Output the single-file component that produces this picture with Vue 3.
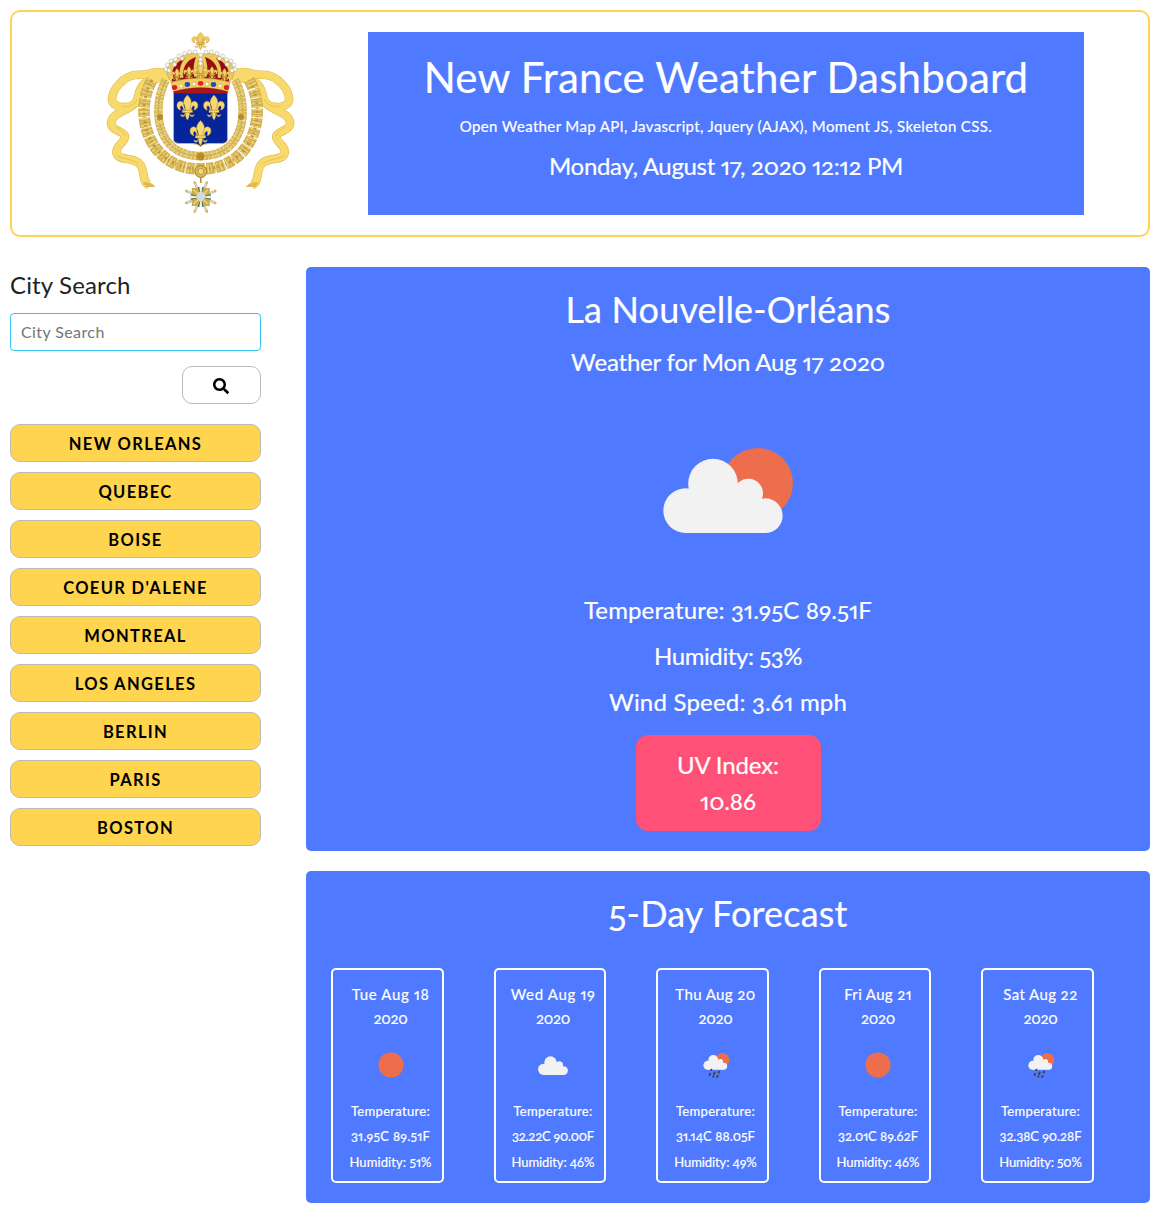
<script setup>
const cities = ['New Orleans', 'Quebec', 'Boise', "Coeur d'Alene", 'Montreal', 'Los Angeles', 'Berlin', 'Paris', 'Boston']

// ls: per-line letter spacing in px
const stats = [
  { text: 'Temperature: 31.95C 89.51F', ls: 0.14 },
  { text: 'Humidity: 53%', ls: -0.4 },
  { text: 'Wind Speed: 3.61 mph', ls: 0.2 }
]

const days = [
  { date: 'Tue Aug 18', dls: 0.67, icon: 'sun', temp: '31.95C 89.51F', tls: 0.29, hum: '51%', hls: 0.08 },
  { date: 'Wed Aug 19', dls: 0.68, icon: 'cloud', temp: '32.22C 90.00F', tls: -0.25, hum: '46%', hls: -0.09 },
  { date: 'Thu Aug 20', dls: 0.4, icon: 'rain', temp: '31.14C 88.05F', tls: 0.05, hum: '49%', hls: -0.09 },
  { date: 'Fri Aug 21', dls: 0.36, icon: 'sun', temp: '32.01C 89.62F', tls: -0.05, hum: '46%', hls: -0.09 },
  { date: 'Sat Aug 22', dls: 0.4, icon: 'rain', temp: '32.38C 90.28F', tls: -0.06, hum: '50%', hls: -0.15 }
]

const pearls = [
  [95, 27], [106, 27], [89.5, 27], [111.5, 27], [84.5, 28.5], [117, 28.5], [79, 31], [122.5, 31], [75.5, 34.5], [126.5, 34.5],
  [71, 36], [131, 36], [67.5, 40], [134, 40], [66, 44.5], [135, 44.5], [69, 45.5], [132, 45.5], [74.5, 39.5], [127, 39.5],
  [100.6, 30], [100.6, 34.5], [100.6, 38.5], [82, 33.5], [119.5, 33.5]
]
const gems = [
  [74.5, 62.5, '#d8222a'], [87.4, 59.5, '#1d4fc0'], [100.6, 58.3, '#d8222a'], [113.5, 59.5, '#1d4fc0'], [126.5, 62.5, '#d8222a']
]
const bandPearls = [[81, 61], [94, 59], [107, 59], [120, 61]]
const crownFleurs = [[77, 50], [89, 48], [112, 48], [124.5, 50]]
const rays = [0, 45, 90, 135, 180, 225, 270, 315]
</script>

<template>
  <div class="page">
    <header class="banner">
      <svg class="crest" width="200" height="183" viewBox="0 7 200 183">
        <defs>
          <path id="fleur" d="M0-12.500C4.500-8 5-4 2 3H-2C-5-4-4.500-8 0-12.500ZM2 3C2-4 5.500-8 9-5.500C12-3 10 3 6.500 2.500C8 .5 7-2.500 5.500-1.500C4.200-.5 4 1.500 4 3ZM-2 3C-2-4-5.500-8-9-5.500C-12-3-10 3-6.500 2.500C-8 .5-7-2.500-5.500-1.500C-4.200-.5-4 1.500-4 3ZM-5 2.500H5V5H-5ZM-1.500 5H1.500C1.800 7 2.500 9 0 12.500C-2.500 9-1.800 7-1.500 5ZM2 5C3 8 4.500 8.500 6.800 7C6 10.500 2.500 10 1.500 5ZM-2 5C-3 8-4.500 8.500-6.800 7C-6 10.500-2.500 10-1.500 5Z" />
          <path id="outer-chain" d="M52 55C33 87 47 144 100.600 144S168.200 87 149.200 55" />
          <path id="inner-chain" d="M66 55C52 80 54 131 100.600 131S149 80 135 55" />
          <g id="ribbon" fill="none" stroke-linejoin="round">
            <path d="M33 80C25 87 12 88 11 98C11.500 106 24 106 25 111C25.500 118 15 120 16.500 128C19 137 34 131 40.500 140C45 147 42 157 49 160" />
            <path d="M68 49C62 46.500 56 46 48 49C45 50 42 49.500 35 50C25 51 12 63 12 75C13 82 25 84 33 80C41 75 36 66 44 59C50 53 60 54 68 51" />
          </g>
        </defs>

        <g v-for="s in [1, -1]" :key="s" :transform="s === 1 ? null : 'translate(201.2 0) scale(-1 1)'">
          <use href="#ribbon" stroke="#e0b84c" stroke-width="8.6" />
          <use href="#ribbon" stroke="#f7da6b" stroke-width="7.4" />
          <path d="M45 157L52 158.500L55.500 162L46 162L43 158Z" fill="#e2b94c" />
          <path d="M22 81C28 83 35 80 37 74M16 102C20 105 24 107 25 111M17 130C22 135 32 133 38 139" fill="none" stroke="#e9c252" stroke-width="1" />
        </g>

        <g fill="none">
          <use href="#outer-chain" stroke="#d3ae4c" stroke-width="11.5" stroke-dasharray="9 1.2 8 1.6" />
          <use href="#outer-chain" stroke="#ead27a" stroke-width="9" stroke-dasharray="2 1.5 1 2" />
          <use href="#outer-chain" stroke="#bd983e" stroke-width="3" stroke-dasharray="2 2.1 1 3.4" />
          <use href="#inner-chain" stroke="#d6b454" stroke-width="8.5" stroke-dasharray="4 .4" />
          <use href="#inner-chain" stroke="#ead47c" stroke-width="6" stroke-dasharray="1.8 1.6" />
          <use href="#inner-chain" stroke="#c29d42" stroke-width="1.5" stroke-dasharray="1.5 1.9" />
        </g>
        <g fill="#b78d2c">
          <circle cx="60" cy="92" r="3" />
          <circle cx="141" cy="92" r="3" />
          <circle cx="100.5" cy="131.5" r="4" />
        </g>

        <!-- shield -->
        <path d="M73.500 66H127.500V114Q127.500 118 122 118.500H109Q103 118.500 100.500 121.500Q98 118.500 92 118.500H79Q73.500 118 73.500 114Z" fill="#06259a" stroke="#d8b44a" />
        <g fill="#f5d873" stroke="#c79c38" stroke-width=".4">
          <use href="#fleur" x="87.4" y="82.5" />
          <use href="#fleur" x="114" y="82.5" />
          <use href="#fleur" x="100.5" y="108" />
        </g>

        <!-- crown -->
        <path d="M72 58C64 48 66 38 76 34C86 28 95 27 100.600 30C106 27 115 28 125 34C135 38 137 48 129 58Z" fill="#edca5c" stroke="#c2963a" stroke-width=".6" />
        <path d="M75 55C69 47 74 38 85 33C80 39 78 48 81 55ZM84 55C81 44 86 35 96 32C93 40 93 48 95 55ZM126 55C132 47 127 38 116 33C121 39 123 48 120 55ZM117 55C120 44 115 35 105 32C108 40 108 48 106 55Z" fill="#960d12" />
        <path d="M72 54Q100 49 129 54V58H72Z" fill="#8f1014" />
        <path d="M100.600 33C105 38 104 47 103 54H98C97 47 96 38 100.600 33Z" fill="#f0cd5f" stroke="#b98b2c" stroke-width=".5" />
        <g fill="#f4d46a" stroke="#b5862a" stroke-width=".7">
          <use v-for="(f, i) in crownFleurs" :key="i" href="#fleur" :transform="`translate(${f[0]} ${f[1]}) scale(.52)`" />
          <use href="#fleur" transform="translate(100.6 47) scale(.66)" />
        </g>
        <path d="M71 57Q100.600 49 130 57L128 66.500Q100.600 58.500 73.500 66.500Z" fill="#f0cc5c" stroke="#b98b2c" stroke-width=".6" />
        <path d="M73.800 66.500Q100.600 58.500 127.600 66.500V68.500H73.800Z" fill="#a61717" />
        <ellipse v-for="(g, i) in gems" :key="'g' + i" :cx="g[0]" :cy="g[1]" rx="2.7" ry="2.4" :fill="g[2]" />
        <circle v-for="(p, i) in bandPearls" :key="'b' + i" :cx="p[0]" :cy="p[1]" r="1.6" fill="#fff" stroke="#b5a97c" stroke-width=".4" />
        <circle v-for="(p, i) in pearls" :key="'p' + i" :cx="p[0]" :cy="p[1]" r="2" fill="#fafafa" stroke="#a9a295" stroke-width=".5" />
        <use href="#fleur" transform="translate(100.6 16) scale(.84 .7)" fill="#f0cd5f" stroke="#c1973a" stroke-width=".6" />

        <!-- order pendant -->
        <circle cx="100.8" cy="146.5" r="6" fill="#dcb84e" stroke="#a98028" />
        <circle cx="100.8" cy="146.5" r="3" fill="#f0d98a" stroke="#b08a36" stroke-width=".8" />
        <path d="M100.800 152.500V158" stroke="#b08a36" stroke-width="1.5" />
        <g transform="translate(100.8 172)">
          <g v-for="r in rays" :key="r" :transform="`rotate(${r + 22.5})`">
            <path d="M-.6-5L-1-15.500H1L.6-5Z" fill="#e7e3d4" stroke="#a69c7c" stroke-width=".5" />
            <circle cy="-15.8" r="1.2" fill="#d9b13f" />
          </g>
          <path d="M-9-9H9V9H-9Z" fill="#cdab4e" />
          <path d="M-10-3L0 0L-10 3ZM10-3L0 0L10 3ZM-3-10L0 0L3-10ZM-3 10L0 0L3 10Z" fill="#3f7a46" />
          <path d="M-10-1.500L0 0L-10 1.500ZM10-1.500L0 0L10 1.500ZM-1.500-10L0 0L1.500-10ZM-1.500 10L0 0L1.500 10Z" fill="#f4f4ee" />
          <path d="M-7-7L7 7M7-7L-7 7" stroke="#e9d487" stroke-width="1.4" />
          <path d="M-3-4L0-6L3-4L5 0L3 2L1 5H-1L-3 2L-5 0Z" fill="#d5d9de" />
        </g>
      </svg>

      <div class="headline">
        <h1>New France Weather Dashboard</h1>
        <p>Open Weather Map API, Javascript, Jquery (AJAX), Moment JS, Skeleton CSS.</p>
        <h5>Monday, August 17, 2020 12:12 PM</h5>
      </div>
    </header>

    <div class="columns">
      <aside class="sidebar">
        <h5>City Search</h5>
        <input type="text" placeholder="City Search" />
        <button class="search" type="button" aria-label="Search">
          <svg width="16" height="16" viewBox="0 0 512 512">
            <path d="M505 442.700L405.300 343c-4.500-4.500-10.600-7-17-7H372c27.600-35.300 44-79.700 44-128C416 93.100 322.900 0 208 0S0 93.100 0 208s93.100 208 208 208c48.300 0 92.700-16.400 128-44v16.300c0 6.400 2.500 12.500 7 17l99.700 99.700c9.400 9.400 24.600 9.400 33.900 0l28.300-28.300c9.400-9.400 9.400-24.600.1-34zM208 336c-70.700 0-128-57.200-128-128 0-70.700 57.200-128 128-128 70.700 0 128 57.200 128 128 0 70.700-57.200 128-128 128z" />
          </svg>
        </button>
        <button v-for="c in cities" :key="c" class="city" type="button">{{ c }}</button>
      </aside>

      <main class="content">
        <section class="panel current">
          <h2>La Nouvelle-Orléans</h2>
          <h5 class="for">Weather for Mon Aug 17 2020</h5>
          <svg class="big-icon" width="160" height="120" viewBox="-6 0 480 360">
            <circle cx="323" cy="160" r="106" fill="#ec6e4c" />
            <g id="cloud" fill="#f2f2f2">
              <circle cx="107" cy="242" r="67" />
              <circle cx="189" cy="161" r="74.5" />
              <circle cx="295" cy="190" r="44" />
              <circle cx="346" cy="257" r="52" />
              <path d="M107 180H300L346 250V309H107Z" />
            </g>
          </svg>
          <h5 v-for="s in stats" :key="s.text" class="stat" :style="{ letterSpacing: s.ls + 'px' }">{{ s.text }}</h5>
          <div class="uv">
            <span>UV Index:</span>
            <span>10.86</span>
          </div>
        </section>

        <section class="panel forecast">
          <h2>5-Day Forecast</h2>
          <div class="days">
            <article v-for="d in days" :key="d.date" class="day">
              <p class="date" :style="{ letterSpacing: d.dls + 'px' }">{{ d.date }}</p>
              <p class="date year">2020</p>
              <svg v-if="d.icon === 'sun'" width="50" height="50" viewBox="0 0 50 50">
                <circle cx="25" cy="25" r="12.6" fill="#ec6e4c" />
              </svg>
              <svg v-else-if="d.icon === 'cloud'" width="50" height="50" viewBox="0 0 50 50">
                <use href="#cloud" transform="translate(6.7 9.1) scale(.0835)" />
              </svg>
              <svg v-else width="50" height="50" viewBox="152 240 150 150">
                <circle cx="246" cy="300" r="21" fill="#ec6e4c" />
                <circle cx="240" cy="307" r="11" fill="#f4502e" />
                <use href="#cloud" transform="translate(181 267.5) scale(.2)" />
                <path d="M213 329v1M236 335l-1 3M209 342l-1 3M223 338l-2 4M219 349v1M232 348l-2 3" stroke="#444" stroke-width="6" stroke-linecap="round" />
              </svg>
              <p class="line label">Temperature:</p>
              <p class="line" :style="{ letterSpacing: d.tls + 'px' }">{{ d.temp }}</p>
              <p class="line" :style="{ letterSpacing: d.hls + 'px' }">Humidity: {{ d.hum }}</p>
            </article>
          </div>
        </section>
      </main>
    </div>
  </div>
</template>

<style>
body {
  margin: 0;
  background: #fff;
}
</style>

<style scoped>
.page {
  box-sizing: border-box;
  width: 1160px;
  height: 1213px;
  padding: 10px;
  font-family: Lato, "Liberation Sans", sans-serif;
  font-feature-settings: "onum", "pnum";
  color: #222;
}

h1, h2, h5, p {
  margin: 0;
  font-weight: 400;
  white-space: nowrap;
}

.banner {
  box-sizing: border-box;
  display: flex;
  height: 227px;
  padding: 20px 64px 20px 88px;
  border: 2px solid #ffd54f;
  border-radius: 10px;
}

.crest {
  flex: none;
}

.headline {
  box-sizing: border-box;
  width: 716px;
  height: 183px;
  margin-left: 68px;
  padding-top: 20px;
  background: #4f79ff;
  color: #fff;
  text-align: center;
  -webkit-text-stroke: 0.2px #fff;
}

.headline h1 {
  font-size: 42px;
  line-height: 50px;
  letter-spacing: 0.19px;
}

.headline p {
  margin-top: 12px;
  font-size: 15px;
  line-height: 24px;
  letter-spacing: 0.36px;
}

h5 {
  font-size: 24px;
  line-height: 36px;
}

.headline h5 {
  margin-top: 10px;
  letter-spacing: -0.32px;
}

.columns {
  display: flex;
  gap: 45px;
  margin-top: 30px;
}

.sidebar {
  display: flex;
  flex-direction: column;
  flex: none;
  width: 251px;
}

.sidebar h5 {
  letter-spacing: 0.15px;
}

.sidebar input {
  box-sizing: border-box;
  height: 38px;
  margin-top: 10px;
  padding: 5px 10px 7px;
  border: 1px solid #33c3f0;
  border-radius: 4px;
  font: 16px Lato, sans-serif;
  letter-spacing: 0.4px;
  outline: none;
}

.sidebar input::placeholder {
  color: #757575;
}

.search,
.city {
  box-sizing: border-box;
  height: 38px;
  padding: 0;
  border: 1px solid #bbb;
  border-radius: 10px;
  color: #000;
}

.search {
  display: flex;
  align-items: center;
  justify-content: center;
  align-self: flex-end;
  width: 79px;
  margin: 15px 0 10px;
  background: #fff;
}

.search svg {
  margin-top: 2px;
  margin-right: 1px;
}

.city {
  margin-top: 10px;
  padding-top: 2px;
  background: #ffd54f;
  font: 700 16.5px Lato, sans-serif;
  letter-spacing: 1.35px;
  text-transform: uppercase;
}

.content {
  flex: 1;
  display: flex;
  flex-direction: column;
  gap: 20px;
}

.panel {
  box-sizing: border-box;
  padding-top: 20px;
  border-radius: 5px;
  background: #4f79ff;
  color: #fff;
  -webkit-text-stroke: 0.2px #fff;
}

.current {
  display: flex;
  flex-direction: column;
  align-items: center;
  height: 584px;
}

.forecast {
  height: 332px;
}

h2 {
  font-size: 36px;
  line-height: 45px;
  letter-spacing: 0.16px;
  text-align: center;
}

.for {
  margin-top: 12px;
  letter-spacing: -0.19px;
}

.big-icon {
  margin: 50px 0 42px;
}

.stat {
  margin-bottom: 10px;
}

.uv {
  box-sizing: border-box;
  display: flex;
  flex-direction: column;
  align-items: center;
  width: 185px;
  height: 96px;
  margin-top: 5px;
  padding-top: 12px;
  border-radius: 12px;
  background: #ff5078;
  font-size: 24px;
  line-height: 36px;
  letter-spacing: -0.13px;
}

.days {
  display: flex;
  gap: 50px;
  margin: 32px 0 0 25px;
}

.day {
  box-sizing: border-box;
  display: flex;
  flex-direction: column;
  align-items: center;
  width: 112.5px;
  height: 215px;
  padding: 12px 0 0 6.5px;
  border: 2px solid #fff;
  border-radius: 5px;
}

.date {
  font-size: 15px;
  line-height: 24px;
}

.year {
  letter-spacing: -0.3px;
}

.day svg {
  flex: none;
  margin: 10px 0 9px;
}

.line {
  font-size: 13px;
  line-height: 25.3px;
}

.label {
  letter-spacing: 0.33px;
}
</style>
